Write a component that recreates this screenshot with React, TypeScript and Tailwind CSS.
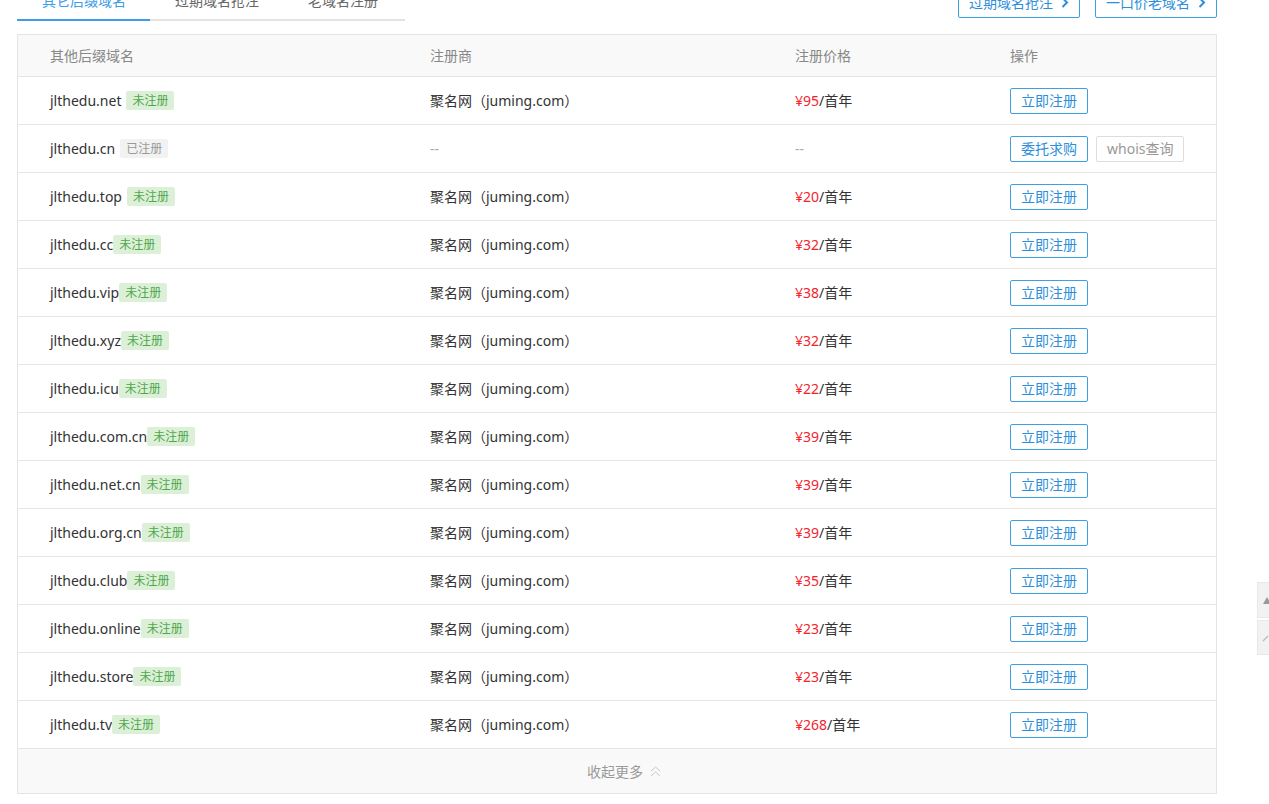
import React from 'react';

type Row = {
  name: string;
  taken?: boolean;
  gap?: boolean;
  price?: string;
};

const rows: Row[] = [
  { name: 'jlthedu.net', gap: true, price: '95' },
  { name: 'jlthedu.cn', gap: true, taken: true },
  { name: 'jlthedu.top', gap: true, price: '20' },
  { name: 'jlthedu.cc', price: '32' },
  { name: 'jlthedu.vip', price: '38' },
  { name: 'jlthedu.xyz', price: '32' },
  { name: 'jlthedu.icu', price: '22' },
  { name: 'jlthedu.com.cn', price: '39' },
  { name: 'jlthedu.net.cn', price: '39' },
  { name: 'jlthedu.org.cn', price: '39' },
  { name: 'jlthedu.club', price: '35' },
  { name: 'jlthedu.online', price: '23' },
  { name: 'jlthedu.store', price: '23' },
  { name: 'jlthedu.tv', price: '268' },
];

const Chevron = () => (
  <svg width="8" height="11" viewBox="0 0 8 11" className="ml-[8px]">
    <path d="M1.5 1 L6 5.5 L1.5 10" fill="none" stroke="#2d8fdc" strokeWidth="2" />
  </svg>
);

const DoubleUp = () => (
  <svg width="11" height="11" viewBox="0 0 11 11" className="ml-[7px]">
    <path d="M1 5 L5.5 1 L10 5" fill="none" stroke="#c8c8c8" strokeWidth="1" />
    <path d="M1 10 L5.5 6 L10 10" fill="none" stroke="#c8c8c8" strokeWidth="1" />
  </svg>
);

export default function App() {
  return (
    <div className="min-h-[804px] bg-white overflow-hidden text-[14px] text-[#333] font-['Noto_Sans','Noto_Sans_CJK_SC',sans-serif]">
      <div className="ml-[17px] w-[1200px] -mt-[19px]">
        {/* tabs + links */}
        <div className="flex justify-between items-end h-[40px]">
          <div className="flex w-[388px] border-b-2 border-[#e3e3e3]">
            <div className="w-[133px] -mb-[2px] border-b-2 border-[#3d9de8] pb-[8px] leading-[20px] pl-[25px] text-[#3d9de8]">
              其它后缀域名
            </div>
            <div className="w-[133px] pb-[8px] leading-[20px] pl-[25px] text-[#666]">过期域名抢注</div>
            <div className="pb-[8px] leading-[20px] pl-[25px] text-[#666]">老域名注册</div>
          </div>
          <div className="flex gap-[15px] mb-[3px]">
            <div className="flex items-center w-[122px] h-[32px] pl-[10px] border border-[#3e9fe3] rounded-[2px] text-[#2d8fdc]">
              过期域名抢注
              <Chevron />
            </div>
            <div className="flex items-center w-[122px] h-[32px] pl-[10px] border border-[#3e9fe3] rounded-[2px] text-[#2d8fdc]">
              一口价老域名
              <Chevron />
            </div>
          </div>
        </div>

        {/* table */}
        <div className="mt-[13px] border border-[#e5e5e5]">
          <div className="grid grid-cols-[412px_365px_215px_1fr] h-[41px] items-center bg-[#f9f9f9] text-[#888]">
            <div className="pl-[32px]">其他后缀域名</div>
            <div>注册商</div>
            <div>注册价格</div>
            <div>操作</div>
          </div>
          {rows.map((r) => (
            <div
              key={r.name}
              className="grid grid-cols-[412px_365px_215px_1fr] h-[48px] items-center border-t border-[#e5e5e5]"
            >
              <div className="pl-[32px] flex items-center">
                <span>{r.name}</span>
                {r.taken ? (
                  <span className="ml-[5px] px-[6px] h-[19px] leading-[19px] text-[12px] bg-[#f2f2f2] text-[#999] rounded-[2px]">
                    已注册
                  </span>
                ) : (
                  <span
                    className={`${r.gap ? 'ml-[5px]' : 'ml-0'} px-[6px] h-[19px] leading-[19px] text-[12px] bg-[#dcf0d8] text-[#4fa74c] rounded-[2px]`}
                  >
                    未注册
                  </span>
                )}
              </div>
              {r.taken ? (
                <>
                  <div className="text-[#aaa]">--</div>
                  <div className="text-[#aaa]">--</div>
                  <div className="flex gap-[8px]">
                    <div className="h-[26px] px-[10px] leading-[24px] border border-[#3e9fe3] rounded-[2px] text-[#2d8fdc]">
                      委托求购
                    </div>
                    <div className="h-[26px] px-[10px] leading-[24px] border border-[#ddd] rounded-[2px] text-[#999]">
                      whois查询
                    </div>
                  </div>
                </>
              ) : (
                <>
                  <div>聚名网（juming.com）</div>
                  <div>
                    <span className="text-[#f5222d]">¥{r.price}</span>/首年
                  </div>
                  <div className="flex">
                    <div className="h-[26px] px-[10px] leading-[24px] border border-[#3e9fe3] rounded-[2px] text-[#2d8fdc]">
                      立即注册
                    </div>
                  </div>
                </>
              )}
            </div>
          ))}
          <div className="flex items-center justify-center h-[45px] pl-[14px] border-t border-[#e5e5e5] bg-[#f9f9f9] text-[#999]">
            收起更多
            <DoubleUp />
          </div>
        </div>
      </div>

      {/* side floating tools */}
      <div className="fixed left-[1257px] top-[582px] flex flex-col gap-[2px]">
        <div className="w-[40px] h-[36px] bg-[#f2f2f2] border border-[#e8e8e8] flex items-center pl-[4px]">
          <svg width="10" height="10" viewBox="0 0 10 10">
            <path d="M1 9 L5 2 L9 9 Z" fill="#9a9a9a" />
          </svg>
        </div>
        <div className="w-[40px] h-[35px] bg-[#f2f2f2] border border-[#e8e8e8] flex items-center pl-[4px]">
          <svg width="10" height="10" viewBox="0 0 10 10">
            <path d="M1 8 L6 3" fill="none" stroke="#bbb" strokeWidth="1.2" />
          </svg>
        </div>
      </div>
    </div>
  );
}
